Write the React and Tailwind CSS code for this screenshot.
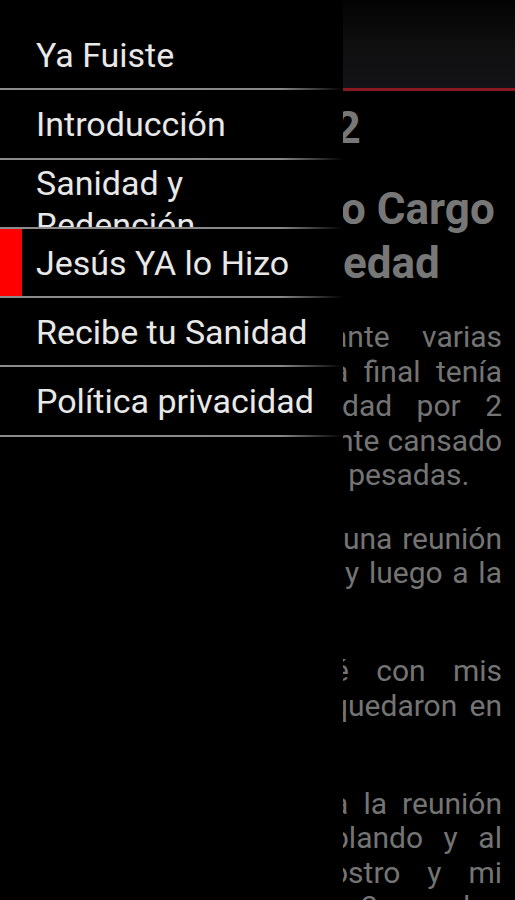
import React from "react";

const menu = [
  { label: "Ya Fuiste" },
  { label: "Introducción" },
  { label: "Sanidad y Redención", wrap: true },
  { label: "Jesús YA lo Hizo", active: true },
  { label: "Recibe tu Sanidad" },
  { label: "Política privacidad" },
];

const paragraphs = [
  [
    { words: ["ante", "varias"], first: "-ml-[12px]" },
    { words: ["a", "final", "tenía"], first: "-ml-[11px]" },
    { words: ["dad", "por", "2"], first: "-ml-[1px]" },
    { words: ["nte", "cansado"], first: "-ml-[6px]" },
    { words: ["r", "pesadas."], first: "-ml-[12px]", last: true },
  ],
  [
    { words: ["una", "reunión"], first: "ml-[0px]" },
    { words: ["y", "luego", "a", "la"], first: "ml-[2px]" },
    { blank: true },
  ],
  [
    { words: ["é", "con", "mis"], first: "-ml-[10px]" },
    { words: ["quedaron", "en"], first: "-ml-[12px]" },
    { blank: true },
  ],
  [
    { words: ["a", "la", "reunión"], first: "-ml-[11px]" },
    { words: ["blando", "y", "al"], first: "-ml-[11px]" },
    { words: ["ostro", "y", "mi"], first: "-ml-[12px]" },
    { words: ["o", "2", "pesadas"], first: "-ml-[10px]" },
  ],
];

function TextLine({ line }) {
  if (line.blank) {
    return <div className="h-[34.5px] shrink-0 leading-[34.5px]">{"\u00a0"}</div>;
  }
  return (
    <div
      className={
        line.last
          ? "flex shrink-0 gap-[7px] whitespace-nowrap h-[34.5px] leading-[34.5px]"
          : "flex shrink-0 justify-between whitespace-nowrap h-[34.5px] leading-[34.5px]"
      }
    >
      {line.words.map((w, i) => (
        <span key={i} className={i === 0 ? line.first : ""}>
          {w}
        </span>
      ))}
    </div>
  );
}

function BackgroundPage() {
  return (
    <div className="flex flex-col w-full h-full">
      <div className="h-[88px] shrink-0 bg-gradient-to-b from-[#040404] via-[#0f0f0f] to-[#141418]" />
      <div className="h-[3px] shrink-0 bg-[#8a1820]" />
      <div className="flex shrink-0 flex-col pl-[343px] pr-[13px] text-[#777777]">
        <div className="mt-[13px] h-[48px] shrink-0 leading-[48px] text-[45px] font-bold whitespace-nowrap">
          <span className="-ml-[8px]">2</span>
        </div>
        <div className="mt-[30px] flex shrink-0 flex-col text-[44px] font-bold leading-[54px] whitespace-nowrap">
          <div className="h-[54px]">
            <span className="-ml-[2px]">o Cargo</span>
          </div>
          <div className="h-[54px]">
            <span>edad</span>
          </div>
        </div>
        <div className="mt-[30px] flex shrink-0 flex-col gap-[29px] text-[30px] text-[#747474]">
          {paragraphs.map((p, i) => (
            <div key={i} className="flex shrink-0 flex-col">
              {p.map((l, j) => (
                <TextLine key={j} line={l} />
              ))}
            </div>
          ))}
        </div>
      </div>
    </div>
  );
}

function Separator() {
  return (
    <div className="h-[2px] shrink-0 w-full bg-[linear-gradient(to_right,#8c8c8c_0%,#888888_82%,rgba(0,0,0,0)_100%)]" />
  );
}

function Drawer() {
  return (
    <div className="absolute left-0 top-0 h-full w-[343px] bg-black pt-[21px] flex flex-col">
      {menu.map((m, i) => (
        <div key={i} className="flex shrink-0 flex-col">
          <div
            className={
              m.wrap
                ? "h-[67.3px] shrink-0 overflow-hidden flex items-start"
                : "h-[67.3px] shrink-0 overflow-hidden flex items-center"
            }
          >
            <div
              className={
                m.active
                  ? "w-[22px] self-stretch bg-[#ff0000] shrink-0"
                  : "w-[22px] self-stretch shrink-0"
              }
            />
            <div
              className={
                m.wrap
                  ? "ml-[14px] pr-[8px] pt-[2px] text-[34px] leading-[42px] text-[#e8e8e8]"
                  : "ml-[14px] pr-[8px] text-[34px] leading-[42px] text-[#e8e8e8] whitespace-nowrap"
              }
            >
              {m.label}
            </div>
          </div>
          <Separator />
        </div>
      ))}
    </div>
  );
}

export default function App() {
  return (
    <div className="relative w-[515px] h-[900px] overflow-hidden bg-black font-[family-name:Roboto,'Noto_Sans',sans-serif]">
      <BackgroundPage />
      <Drawer />
    </div>
  );
}
